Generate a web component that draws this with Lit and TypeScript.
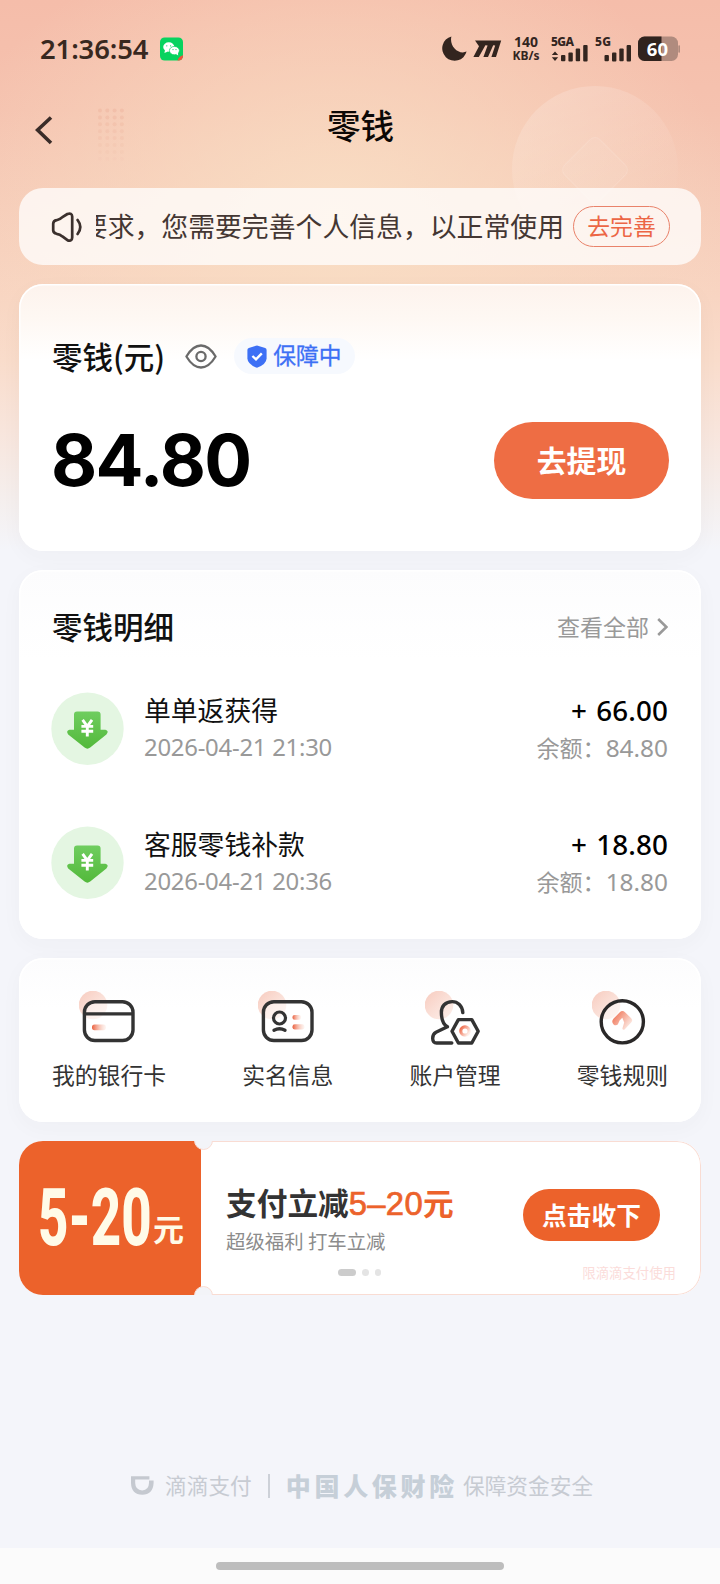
import { LitElement, html, css, svg } from "lit";
import { customElement, property } from "lit/decorators.js";

interface Entry {
  title: string;
  time: string;
  amount: string;
  balance: string;
}

const ENTRIES: Entry[] = [
  { title: "单单返获得", time: "2026-04-21 21:30", amount: "+ 66.00", balance: "84.80" },
  { title: "客服零钱补款", time: "2026-04-21 20:36", amount: "+ 18.80", balance: "18.80" },
];

const blob = (id: string, cx: number) => svg`
  <defs>
    <linearGradient id=${id} x1="0" y1="0" x2="1" y2="1">
      <stop offset="0" stop-color="#f5b9a8" stop-opacity=".75"/>
      <stop offset="1" stop-color="#fbe3da" stop-opacity=".55"/>
    </linearGradient>
    <linearGradient id="dash" x1="0" y1="0" x2="1" y2="0">
      <stop offset="0" stop-color="#ea5f3d"/>
      <stop offset="1" stop-color="#fbe0d5" stop-opacity=".3"/>
    </linearGradient>
    <linearGradient id="mark" x1="0" y1="0" x2="1" y2=".7">
      <stop offset="0" stop-color="#ee6443"/>
      <stop offset="1" stop-color="#fdeee8"/>
    </linearGradient>
  </defs>
  <circle cx=${cx} cy="14" r="14.3" fill="url(#${id})"/>`;

const TOOLS = [
  {
    label: "我的银行卡",
    icon: svg`${blob("b1", 14)}
      <rect x="5.4" y="10.7" width="48.6" height="38.8" rx="10.5" fill="#fff" fill-opacity=".45" stroke="#333" stroke-width="3.4"/>
      <path d="M5.4 22.8H54" stroke="#333" stroke-width="3.2"/>
      <rect x="13" y="33.6" width="14" height="5.6" rx="2.6" fill="url(#dash)"/>`,
  },
  {
    label: "实名信息",
    icon: svg`${blob("b2", 14)}
      <rect x="5.4" y="10.7" width="48.6" height="38.8" rx="10.5" fill="#fff" fill-opacity=".45" stroke="#333" stroke-width="3.4"/>
      <circle cx="21.5" cy="27" r="6" stroke="#333" stroke-width="3.2"/>
      <path d="M16 39.2Q21.5 36.4 27 39.2" stroke="#333" stroke-width="3.4" stroke-linecap="round"/>
      <rect x="34.5" y="24" width="8.5" height="4.8" rx="2" fill="url(#dash)"/>
      <rect x="34.5" y="33.2" width="12" height="5.4" rx="2.4" fill="url(#dash)"/>`,
  },
  {
    label: "账户管理",
    icon: svg`${blob("b3", 14)}
      <path d="M37.8 21.6C37.4 14.6 32.6 10.6 27.2 10.6C20.4 10.6 16.2 15.4 16.4 21.6C16.4 28.8 18.6 33.6 22.4 35.8L11 41.2C6.6 43.6 6.4 52 11.6 52H26.8" stroke="#333" stroke-width="3.4" stroke-linecap="round" stroke-linejoin="round"/>
      <path d="M33.4 28.6H46.8L53.2 40.3L46.8 52H33.4L27 40.3Z" fill="#fff" stroke="#333" stroke-width="3.4" stroke-linejoin="round"/>
      <circle cx="40" cy="40" r="4.2" stroke="url(#mark)" stroke-width="3.2"/>`,
  },
  {
    label: "零钱规则",
    icon: svg`${blob("b4", 14)}
      <circle cx="30.3" cy="30.8" r="21.1" fill="#fff" fill-opacity=".4" stroke="#2a2828" stroke-width="3.4"/>
      <path d="M27.8 21.2Q30.4 19 33 21.2L39.4 27.4Q41 29.4 39.4 31.2L32.6 38.4Q30.8 39.4 30.4 37.4L32.2 31.6L30.3 26.8L27.6 29.4L25.8 33.6Q23.6 35 21.6 33.4Q19 30.8 21.4 27.8Z" fill="url(#mark)"/>`,
  },
];

const CJK = css`"Noto Sans CJK SC", sans-serif`;

@customElement("status-bar")
class StatusBar extends LitElement {
  static styles = css`
    :host { display: flex; align-items: center; height: 97px; padding: 0 40px 0 40px; box-sizing: border-box; color: #38281f; }
    .time { font: 600 27.4px/40px "Noto Sans", sans-serif; width: 120px; letter-spacing: -0.1px; }
    .chat { display: block; }
    .right { margin-left: auto; display: flex; align-items: center; height: 26px; color: #33251f; }
    .speed { font: 700 14px/14px "Noto Sans", sans-serif; text-align: center; width: 30px; margin: 0 10px 0 9px; }
    .speed span { display: block; }
    .kb { font-size: 12px; }
    .sig { font-family: "Noto Sans", sans-serif; font-weight: 800; font-size: 12px; fill: currentColor; margin-right: 7px; overflow: visible; }
    .num { font: 700 18.5px "Noto Sans", sans-serif; fill: #fff; }
    svg { display: block; }
  `;
  render() {
    return html`
      <span class="time">21:36:54</span>
      <svg class="chat" width="23" height="24" viewBox="0 0 23 24" fill="none">
        <defs><clipPath id="c"><rect y=".5" width="23" height="23" rx="4.6"/></clipPath></defs>
        <g clip-path="url(#c)">
          <rect width="23" height="24" fill="#07d35f"/>
          <circle cx="24.5" cy="25" r="7" fill="#f5503c"/>
        </g>
        <ellipse cx="8.8" cy="10" rx="5.6" ry="4.7" fill="#fff"/><path d="M5 13L4.4 16L8 14.6Z" fill="#fff"/>
        <ellipse cx="14.4" cy="13.6" rx="5" ry="4.2" fill="#fff" stroke="#07d35f" stroke-width=".7"/><path d="M16 17L18.2 18.4L18 15.6Z" fill="#fff"/>
        <g fill="#07d35f"><circle cx="6.8" cy="8.8" r=".6"/><circle cx="10.6" cy="8.8" r=".6"/><circle cx="13" cy="12.6" r=".6"/><circle cx="16" cy="12.6" r=".6"/></g>
      </svg>
      <div class="right">
        <svg width="60" height="26" viewBox="0 0 60 26" fill="currentColor">
          <path d="M9.4 .4A12.4 12.4 0 1 0 24.6 15.6C16.4 19.2 7 10 9.4 .4Z"/>
          <path d="M33 4.6H59.2L54 21H49.4L53.2 9.6L51.2 9.2L46 21H41.4L45.6 9.6L43.4 9.2L36.8 21H31.4L37 10.2Z"/>
        </svg>
        <div class="speed"><span>140</span><span class="kb">KB/s</span></div>
        <svg class="sig" width="37" height="26" viewBox="0 0 37 26">
          <text x="0" y="10" textLength="23">5GA</text>
          <path d="M4 15.6L7.2 19H.8ZM4 25L.8 21.2H7.2Z"/>
          <rect x="10" y="19" width="4.4" height="6.3" rx="1"/><rect x="17.4" y="16.4" width="4.4" height="9" rx="1"/><rect x="24.7" y="12.6" width="4.4" height="12.7" rx="1"/><rect x="32.2" y="9" width="4.4" height="16.4" rx="1"/>
        </svg>
        <svg class="sig" width="36" height="26" viewBox="0 0 36 26">
          <text x="0" y="10" textLength="16">5G</text>
          <rect x="9.5" y="19" width="4.4" height="6.3" rx="1"/><rect x="17" y="16.4" width="4.4" height="9" rx="1"/><rect x="24.3" y="12.6" width="4.4" height="12.7" rx="1"/><rect x="31.6" y="9" width="4.4" height="16.4" rx="1"/>
        </svg>
        <svg width="42" height="26" viewBox="0 0 42 26">
          <defs><clipPath id="b"><rect y=".6" width="40" height="24.4" rx="6.5"/></clipPath></defs>
          <g clip-path="url(#b)"><rect width="40" height="26" fill="#b08b7e"/><rect width="23.5" height="26" fill="#30231e"/></g>
          <rect x="40.3" y="9.3" width="1.7" height="7.4" rx=".8" fill="#b08b7e"/>
          <text class="num" x="8.8" y="19.6">60</text>
        </svg>
      </div>`;
  }
}

@customElement("entry-row")
class EntryRow extends LitElement {
  @property({ attribute: false }) entry!: Entry;
  static styles = css`
    :host { display: flex; align-items: center; height: 73px; font-family: ${CJK}; }
    svg { flex: none; margin-right: 20px; display: block; }
    .col { display: flex; flex-direction: column; }
    .right { margin-left: auto; align-items: flex-end; }
    .title { font-size: 26.8px; line-height: 37px; color: #111; white-space: nowrap; }
    .sub { font-size: 23.1px; line-height: 37px; color: #999; white-space: nowrap; }
    .time { font-family: "Noto Sans", sans-serif; font-size: 23.9px; line-height: 38px; letter-spacing: -0.25px; }
    .n { font-family: "Noto Sans", sans-serif; font-size: 24.4px; font-weight: 450; }
    .amount { font: 500 27.8px/38px "Noto Sans", sans-serif; color: #000; letter-spacing: 0.1px; word-spacing: 2px; }
  `;
  render() {
    const e = this.entry;
    return html`
      <svg width="73" height="73" viewBox="0 0 73 73" fill="none">
        <defs><linearGradient id="g" x1="0" y1="0" x2="0" y2="1"><stop stop-color="#6fcd5f"/><stop offset="1" stop-color="#53b93b"/></linearGradient></defs>
        <circle cx="36.5" cy="36.7" r="36.2" fill="#e4f6e2"/>
        <path d="M26 19.6H46.6Q49.6 19.6 49.6 22.6V37.8H54.4Q58.4 39 55.4 42.4L39.2 55.6Q36.4 57.8 33.6 55.6L17.2 42.4Q14.6 38.8 18.4 37.8H23V22.6Q23 19.6 26 19.6Z" fill="url(#g)"/>
        <path d="M31.6 27.8L36.3 34.4L41 27.8M30.4 34.4H42.2M30.4 39.2H42.2M36.3 34.2V44.6" stroke="#fff" stroke-width="2.9"/>
      </svg>
      <div class="col"><span class="title">${e.title}</span><span class="sub time">${e.time}</span></div>
      <div class="col right"><span class="amount">${e.amount}</span><span class="sub">余额：<span class="n">${e.balance}</span></span></div>`;
  }
}

@customElement("app-root")
class AppRoot extends LitElement {
  static styles = css`
    :host {
      display: flex; flex-direction: column; position: relative; width: 720px; height: 1584px; overflow: hidden;
      font-family: ${CJK};
      background:
        radial-gradient(ellipse 400px 290px at 335px 215px, rgba(249, 222, 196, .95), rgba(249, 222, 196, 0)),
        linear-gradient(180deg, #f5bdaa 0, #f5c2af 110px, #f6ccb9 210px, #f8d4c1 290px, #f9dccb 360px, #f8e5dc 430px, #f5eeec 495px, #f4f5fa 550px);
      background-color: #f4f5fa;
    }
    svg { display: block; flex: none; }
    .decor { position: absolute; left: 0; top: 0; }
    .nav { display: flex; align-items: center; height: 66px; padding: 0 35px; margin-bottom: 25px; position: relative; }
    .nav h1 { position: absolute; left: 1px; right: 0; top: 3px; margin: 0; text-align: center; font-size: 33.6px; line-height: 50px; font-weight: 500; color: #0c0806; }
    .panel { margin: 0 19px; border-radius: 24px; box-sizing: border-box; position: relative; flex: none; }
    .notice { height: 77px; background: rgba(255, 255, 255, .75); display: flex; align-items: center; padding: 0 31px 0 32px; }
    .ticker { width: 468px; margin-left: 13px; overflow: hidden; display: flex; justify-content: flex-end; white-space: nowrap; font-size: 26.85px; line-height: 40px; color: #443733; padding-bottom: 2px; }
    .fix { margin-left: 9px; width: 97px; height: 41px; border: 1px solid #e9826a; border-radius: 21px; box-sizing: border-box; font-size: 22.8px; line-height: 37px; text-align: center; color: #ec6645; white-space: nowrap; }
    .card { background: #fff; box-shadow: inset 0 0 0 1.5px #fff, 0 6px 22px rgba(50, 50, 50, .03); }
    .balance { margin-top: 19px; height: 267px; padding: 53px 32px 0 33px; background: linear-gradient(180deg, #fdf3ed 0, #fef8f3 34px, #fff 76px); }
    .row { display: flex; align-items: center; }
    .label { font-size: 30.5px; line-height: 38px; font-weight: 500; color: #111; white-space: nowrap; }
    .eye { margin: 0 17px 0 20px; }
    .badge { height: 36px; width: 121px; box-sizing: border-box; padding-left: 13px; border-radius: 18px; background: #f6f9fe; color: #3d70f5; font-size: 22.8px; line-height: 32px; white-space: nowrap; gap: 6px; }
    .badge span { height: 34px; -webkit-text-stroke: .3px currentColor; }
    .money { margin-top: 45px; height: 80px; justify-content: space-between; }
    .sum { font: 650 71px/80px Inter, sans-serif; letter-spacing: -1.6px; color: #000; margin-left: -1px; }
    .cash { width: 175px; height: 77px; border-radius: 39px; background: #ee6d44; color: #fff; font-size: 29.8px; line-height: 74px; font-weight: 600; text-align: center; }
    .list { margin-top: 19px; height: 369px; padding: 36px 33px 0 32px; background: linear-gradient(180deg, #fcfcfd 0, #fff 90px); }
    .head { height: 40px; justify-content: space-between; margin-bottom: 45.5px; padding-left: 1px; }
    .all { font-size: 23px; line-height: 38px; color: #999; gap: 8px; }
    .all svg { margin-top: 2px; }
    entry-row { margin-bottom: 61.3px; }
    .tools { margin-top: 19px; height: 164px; padding: 33px 33px 0; display: flex; justify-content: space-between; background: linear-gradient(180deg, #fcfcfd 0, #fff 50px); }
    .tool { display: flex; flex-direction: column; align-items: center; font-size: 22.8px; line-height: 34px; color: #333; gap: 11px; white-space: nowrap; }
    .coupon { margin-top: 19px; height: 154px; display: flex; background: #fff; overflow: hidden; }
    .frame { position: absolute; inset: 0 0 0 182px; border: 1.4px solid #f9dcd3; border-left: 0; border-radius: 0 24px 24px 0; pointer-events: none; }
    .off { width: 182px; background: #ec622b; color: #fffbe8; display: flex; align-items: center; flex: none; }
    .big { font: 800 80px/153px Roboto, sans-serif; transform: scaleX(.66); transform-origin: 0 50%; width: 113px; margin-left: 19px; white-space: nowrap; }
    .yuan { font-size: 31px; line-height: 40px; font-weight: 700; margin: 19px 0 0 2px; }
    .notch { position: absolute; left: 175px; width: 19px; height: 19px; border-radius: 50%; background: #f3f4f8; border: 1px solid #f9dcd3; box-sizing: border-box; }
    .nt { top: -10px; }
    .nb { bottom: -10px; }
    .deal { padding: 43px 0 0 25px; width: 298px; }
    .offer { font-size: 30.7px; line-height: 36px; font-weight: 600; color: #333; white-space: nowrap; }
    .hot { color: #ec622b; }
    .hot span { font-family: "Liberation Sans", sans-serif; font-weight: 400; font-size: 32.8px; -webkit-text-stroke: .7px #ec622b; letter-spacing: .3px; }
    .perk { font-size: 19.4px; line-height: 26px; margin-top: 6px; color: #8c8c8c; white-space: nowrap; }
    .dots { display: flex; gap: 6px; margin: 15px 0 0 112px; }
    .dots i { width: 6.5px; height: 6.5px; border-radius: 4px; background: #e4e4e4; }
    .dots i.on { width: 18px; background: #ccc; }
    .act { display: flex; flex-direction: column; width: 136px; padding-top: 48px; align-items: flex-end; }
    .take { width: 137px; height: 52px; border-radius: 26px; background: #ec622b; color: #fff; font-size: 24.7px; line-height: 50px; font-weight: 700; text-align: center; }
    .limit { font-size: 13.4px; line-height: 20px; color: #fbdcda; margin: 21px -16px 0 0; white-space: nowrap; }
    .foot { margin-top: 170px; height: 40px; display: flex; align-items: center; padding-left: 131px; color: #c7cbd2; font-size: 21.7px; line-height: 36px; white-space: nowrap; padding-bottom: 2px; }
    .foot .pay { margin-left: 11px; }
    .foot .bar { width: 2px; height: 24px; background: #cdd1d8; margin: 2px 16px 0 16px; }
    .foot b { font-weight: 900; font-size: 25px; letter-spacing: 3.7px; color: #c6cfd8; margin-right: 5px; }
    .home { margin-top: auto; height: 36px; background: #fbfbfb; display: flex; justify-content: center; align-items: center; }
    .home i { width: 288px; height: 8px; border-radius: 4px; background: #bdbdbd; }
  `;

  render() {
    const dots = [];
    for (let r = 0; r < 8; r++) for (let c = 0; c < 4; c++)
      dots.push(svg`<circle cx=${100 + c * 7.3} cy=${110.5 + r * 6.9} r="2" fill="#e9a58e" fill-opacity=${0.3 - r * 0.037}/>`);
    return html`
      <svg class="decor" width="720" height="290" viewBox="0 0 720 290">
        <defs>
          <linearGradient id="disc" x1=".1" y1="0" x2=".6" y2="1"><stop stop-color="#fff" stop-opacity=".2"/><stop offset=".9" stop-color="#fff" stop-opacity="0"/></linearGradient>
        </defs>
        ${dots}
        <circle cx="595" cy="169" r="83" fill="url(#disc)"/>
        <rect x="570" y="145" width="50" height="50" rx="7" transform="rotate(45 595 170)" fill="#fff" fill-opacity=".05" stroke="#fff" stroke-opacity=".12"/>
      </svg>
      <status-bar></status-bar>
      <div class="nav">
        <svg width="18" height="30" viewBox="0 0 18 30" fill="none"><path d="M16 2.5L2.6 15L16 28" stroke="#3a2c28" stroke-width="3.6"/></svg>
        <h1>零钱</h1>
      </div>
      <div class="panel notice">
        <svg width="32" height="30" viewBox="0 0 32 30" fill="none" stroke="#3b302d" stroke-width="2.7" stroke-linecap="round" stroke-linejoin="round">
          <path d="M5.6 8.2Q9.4 7.4 11.4 5.2L16.4 2Q21 .4 21.2 4.6V25.4Q21 29.6 16.8 28.4L11.4 24.4Q9 22.2 5.6 21.8Q2.4 21 2.2 18.4V11.6Q2.4 8.8 5.6 8.2Z"/>
          <path d="M26.6 8Q32 15 26.6 22"/>
        </svg>
        <div class="ticker"><span>要求，您需要完善个人信息，以正常使用</span></div>
        <div class="fix">去完善</div>
      </div>
      <div class="panel card balance">
        <div class="row">
          <span class="label">零钱(元)</span>
          <svg class="eye" width="32" height="25" viewBox="0 0 32 25" fill="none" stroke="#6a6a6a" stroke-width="2.3"><path d="M1.4 12.5Q8 1.5 16 1.5T30.6 12.5Q24 23.5 16 23.5T1.4 12.5Z" stroke-linejoin="round"/><circle cx="16" cy="12.5" r="4.6"/></svg>
          <span class="row badge">
            <svg width="20" height="23" viewBox="0 0 20 23"><path d="M10 .4L18.2 3Q19.6 3.6 19.6 5V13.4Q19.4 19 10 22.8Q.6 19 .4 13.4V5Q.4 3.6 1.8 3Z" fill="#3d70f5"/><path d="M5.4 11L9 14.4L14.8 8.4" stroke="#fff" stroke-width="2.4" fill="none"/></svg>
            <span>保障中</span>
          </span>
        </div>
        <div class="row money"><span class="sum">84.80</span><span class="cash">去提现</span></div>
      </div>
      <div class="panel card list">
        <div class="row head">
          <span class="label">零钱明细</span>
          <span class="row all">查看全部<svg width="11" height="18" viewBox="0 0 11 18" fill="none"><path d="M1.2 1L9.4 9L1.2 17" stroke="#999" stroke-width="2.6"/></svg></span>
        </div>
        ${ENTRIES.map((e) => html`<entry-row .entry=${e}></entry-row>`)}
      </div>
      <div class="panel card tools">
        ${TOOLS.map((t) => html`<div class="tool"><svg width="60" height="56" viewBox="0 0 60 56" fill="none">${t.icon}</svg><span>${t.label}</span></div>`)}
      </div>
      <div class="panel coupon">
        <div class="off"><span class="big">5-20</span><span class="yuan">元</span></div>
        <div class="deal">
          <div class="offer">支付立减<span class="hot"><span>5–20</span>元</span></div>
          <div class="perk">超级福利 打车立减</div>
          <div class="dots"><i class="on"></i><i></i><i></i></div>
        </div>
        <div class="act"><span class="take">点击收下</span><span class="limit">限滴滴支付使用</span></div>
        <i class="frame"></i><i class="notch nt"></i><i class="notch nb"></i>
      </div>
      <div class="foot">
        <svg width="23" height="19" viewBox="0 0 23 19"><path d="M0 .2H18.4V3.4H4.2V7Q4.4 14.2 11.2 14.4Q17.8 14.2 18 7V4.4H22.6V7Q22 18.6 11.2 18.8Q.4 18.6 0 7Z" fill="#c5c9d0"/></svg>
        <span class="pay">滴滴支付</span><i class="bar"></i><b>中国人保财险</b><span>保障资金安全</span>
      </div>
      <div class="home"><i></i></div>`;
  }
}
